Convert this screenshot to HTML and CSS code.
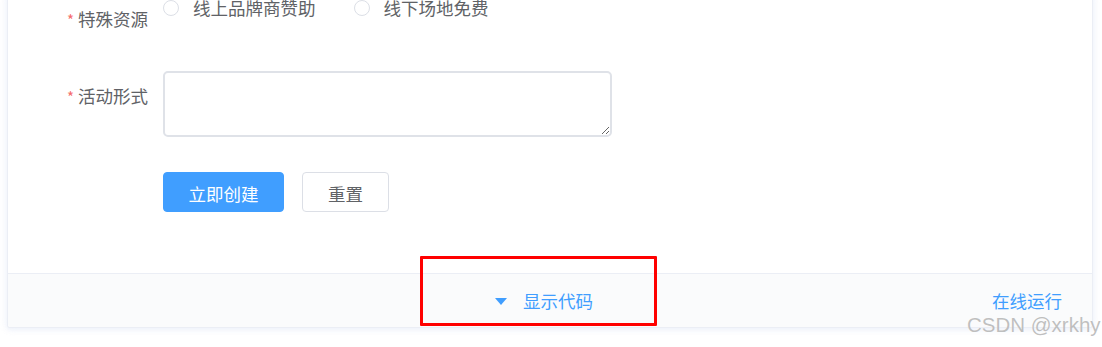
FILE: index.html
```html
<!DOCTYPE html>
<html lang="zh-CN">
<head>
<meta charset="utf-8">
<title>表单</title>
<link rel="stylesheet" href="styles.css">
</head>
<body>
<div class="wrap">
  <div class="card">
    <div class="card-body">
      <div class="form">
        <div class="row row-radio">
          <div class="label"><span class="star">*</span>特殊资源</div>
          <div class="radios">
            <label class="radio"><span class="circle"></span><span class="rtext">线上品牌商赞助</span></label>
            <label class="radio"><span class="circle"></span><span class="rtext">线下场地免费</span></label>
          </div>
        </div>
        <div class="row row-text">
          <div class="label"><span class="star">*</span>活动形式</div>
          <textarea class="textarea"></textarea>
        </div>
        <div class="row row-btn">
          <div class="label"></div>
          <div class="buttons">
            <button class="btn btn-primary">立即创建</button>
            <button class="btn btn-default">重置</button>
          </div>
        </div>
      </div>
    </div>
    <div class="card-footer">
      <div class="side"></div>
      <div class="toggle"><span class="tri"></span><span class="toggle-text">显示代码</span></div>
      <div class="side side-right"><span class="run">在线运行</span></div>
    </div>
  </div>
</div>
<div class="highlight"></div>
<div class="watermark">CSDN @xrkhy</div>
</body>
</html>
```

FILE: styles.css
```css
html, body {
  margin: 0;
  padding: 0;
  background: #ffffff;
  overflow: hidden;
}
body {
  font-family: "Noto Sans CJK SC", "Noto Sans", sans-serif;
  color: #606266;
  width: 1102px;
  height: 347px;
  position: relative;
}
.wrap {
  padding: 0 9px 0 7px;
}
.card {
  border: 1px solid #ebeef5;
  border-top: none;
  border-radius: 0 0 3px 3px;
  background: #ffffff;
  box-shadow: 0 0 8px 0 rgba(232, 237, 250, 0.6), 0 2px 4px 0 rgba(232, 237, 250, 0.5);
}
.card-body {
  padding: 0 0 61px 23px;
}
.form {
  margin-top: -6px;
}
.row {
  display: flex;
  align-items: flex-start;
}
.label {
  width: 132px;
  box-sizing: border-box;
  padding-right: 15px;
  text-align: right;
  font-size: 17.5px;
  line-height: 50px;
  height: 50px;
  color: #606266;
  flex: none;
}
.star {
  color: #f56c6c;
  margin-right: 4px;
  font-size: 15px;
}
.radios {
  display: flex;
  align-items: center;
  height: 26px;
}
.radio {
  display: flex;
  align-items: center;
  margin-right: 38px;
  font-size: 17.5px;
  color: #606266;
}
.circle {
  width: 16px;
  height: 16px;
  box-sizing: border-box;
  border: 1px solid #dcdfe6;
  border-radius: 50%;
  background: #fff;
  margin-right: 14px;
  margin-top: 2px;
}
.row-text {
  margin-top: 27px;
}
.textarea {
  width: 449px;
  height: 66px;
  box-sizing: border-box;
  border: 2px solid #dfe2e8;
  border-radius: 5px;
  margin: 0;
  padding: 6px 12px;
  font-family: inherit;
  resize: vertical;
  outline: none;
}
.row-btn {
  margin-top: 35px;
}
.row-btn .label {
  height: 40px;
}
.buttons {
  display: flex;
  gap: 18px;
}
.btn {
  height: 40px;
  box-sizing: border-box;
  padding: 4px 24.5px 0;
  border-radius: 4px;
  font-family: inherit;
  font-size: 17.5px;
  line-height: 1;
  cursor: pointer;
}
.btn-primary {
  background: #409eff;
  border: 1px solid #409eff;
  color: #ffffff;
}
.btn-default {
  background: #ffffff;
  border: 1px solid #dcdfe6;
  color: #606266;
  padding: 4px 25px 0;
}
.card-footer {
  height: 54px;
  box-sizing: border-box;
  border-top: 1px solid #ebeef5;
  background: #fafbfc;
  display: grid;
  grid-template-columns: 1fr auto 1fr;
  align-items: center;
  border-radius: 0 0 3px 3px;
}
.toggle {
  display: flex;
  align-items: center;
  margin-right: 12px;
  color: #409eff;
  font-size: 17.5px;
}
.tri {
  width: 0;
  height: 0;
  border-left: 6px solid transparent;
  border-right: 6px solid transparent;
  border-top: 7px solid #409eff;
  margin-right: 16px;
  margin-top: 2px;
}
.side-right {
  display: flex;
  justify-content: flex-end;
  padding-right: 30px;
}
.run {
  color: #409eff;
  font-size: 17.5px;
}
.highlight {
  position: absolute;
  left: 420px;
  top: 256px;
  width: 237px;
  height: 70px;
  box-sizing: border-box;
  border: 3px solid #ff0000;
  border-radius: 1px;
}
.watermark {
  position: absolute;
  left: 967px;
  top: 313px;
  font-family: "Liberation Sans", Arial, sans-serif;
  font-size: 20.5px;
  color: rgba(170, 170, 170, 0.75);
  text-shadow: 0 0 1px rgba(255, 255, 255, 0.8);
  white-space: nowrap;
}
```
